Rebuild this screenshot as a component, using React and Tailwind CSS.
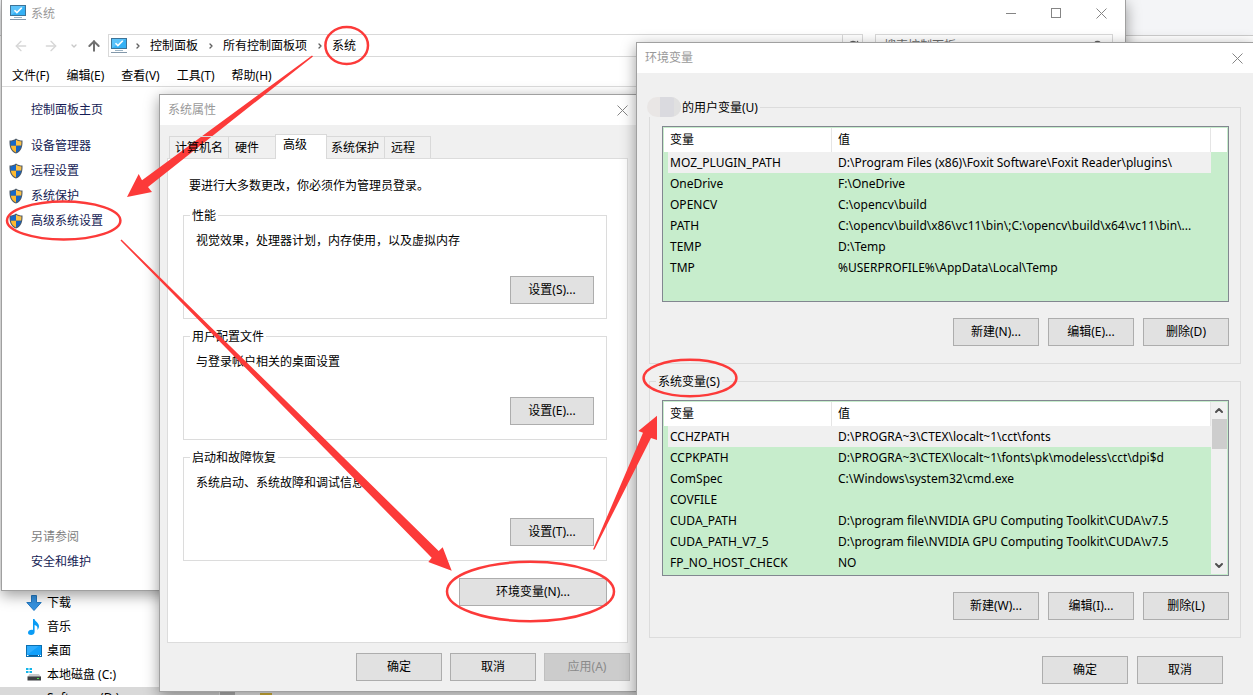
import React from 'react';
import { ArrowLeft, ArrowRight, ArrowUp, ChevronDown, ChevronRight, ChevronUp, RotateCw, Search } from "lucide-react";

const menus = ["文件(F)", "编辑(E)", "查看(V)", "工具(T)", "帮助(H)"];

const tasks = ["设备管理器", "远程设置", "系统保护", "高级系统设置"];

const crumbs = ["控制面板", "所有控制面板项", "系统"];

const settingGroups = [
  { title: "性能", text: "视觉效果，处理器计划，内存使用，以及虚拟内存", button: "设置(S)..." },
  { title: "用户配置文件", text: "与登录帐户相关的桌面设置", button: "设置(E)..." },
  { title: "启动和故障恢复", text: "系统启动、系统故障和调试信息", button: "设置(T)..." },
];

const userVars = [
  ["MOZ_PLUGIN_PATH", "D:\\Program Files (x86)\\Foxit Software\\Foxit Reader\\plugins\\"],
  ["OneDrive", "F:\\OneDrive"],
  ["OPENCV", "C:\\opencv\\build"],
  ["PATH", "C:\\opencv\\build\\x86\\vc11\\bin\\;C:\\opencv\\build\\x64\\vc11\\bin\\..."],
  ["TEMP", "D:\\Temp"],
  ["TMP", "%USERPROFILE%\\AppData\\Local\\Temp"],
];

const systemVars = [
  ["CCHZPATH", "D:\\PROGRA~3\\CTEX\\localt~1\\cct\\fonts"],
  ["CCPKPATH", "D:\\PROGRA~3\\CTEX\\localt~1\\fonts\\pk\\modeless\\cct\\dpi$d"],
  ["ComSpec", "C:\\Windows\\system32\\cmd.exe"],
  ["COVFILE", ""],
  ["CUDA_PATH", "D:\\program file\\NVIDIA GPU Computing Toolkit\\CUDA\\v7.5"],
  ["CUDA_PATH_V7_5", "D:\\program file\\NVIDIA GPU Computing Toolkit\\CUDA\\v7.5"],
  ["FP_NO_HOST_CHECK", "NO"],
];

/* ---------- icons ---------- */

const MonitorIcon = () => (
  <svg className="w-4 h-4 shrink-0" viewBox="0 0 16 16" aria-hidden="true">
    <rect x="0.5" y="0.5" width="15" height="10" fill="#35b1f5" stroke="#3d7397" />
    <path d="M1 1h14L1 10z" fill="#5cc3fa" />
    <path d="M4.5 5.2l2.4 2.4L11.8 2.8" fill="none" stroke="#fff" strokeWidth="1.6" />
    <path d="M4 12.5h8" stroke="#9db4c4" />
    <path d="M0 14.5h16" stroke="#8398aa" />
  </svg>
);

const ShieldIcon = () => (
  <svg className="w-[14px] h-4 shrink-0" viewBox="0 0 14 16" aria-hidden="true">
    <path d="M7 0.4C5.2 1.8 3 2.4 0.5 2.4 0.3 8.5 1.4 13 7 15.6 12.6 13 13.7 8.5 13.5 2.4 11 2.4 8.8 1.8 7 0.4z" fill="#4d5a68" />
    <path d="M7 1.8C5.4 2.9 3.6 3.4 1.6 3.5c0 1.6 0 3 .3 4.3H7z" fill="#1668c9" />
    <path d="M7 1.8c1.6 1.1 3.4 1.6 5.4 1.7 0 1.6 0 3-.3 4.3H7z" fill="#fdc144" />
    <path d="M1.9 7.8C2.4 10.9 3.8 13 7 14.4V7.8z" fill="#fdb92f" />
    <path d="M12.1 7.8C11.6 10.9 10.2 13 7 14.4V7.8z" fill="#1562c0" />
  </svg>
);

const CloseIcon = () => (
  <svg className="w-[11px] h-[11px]" viewBox="0 0 11 11" aria-hidden="true">
    <path d="M0.5 0.5l10 10M10.5 0.5l-10 10" stroke="#858585" strokeWidth="1" />
  </svg>
);

const DownloadIcon = () => (
  <svg className="w-4 h-4" viewBox="0 0 16 16" aria-hidden="true">
    <path d="M5.5 0.5h5v7h4.7L8 15.5 0.8 7.5h4.7z" fill="#3592e0" stroke="#2379c2" />
  </svg>
);

const MusicIcon = () => (
  <svg className="w-4 h-4" viewBox="0 0 16 16" aria-hidden="true">
    <path d="M7 0h1.500c.4 2.600 4.800 3.800 4.500 7.600-.1 1.500-.8 2.500-1.800 3.400.8-2.600.1-4.200-2.600-5V13c0 1.800-1.600 3-3.500 3C3.300 16 2 15.200 2 13.800c0-1.700 1.700-3 3.700-3 .5 0 .9.100 1.300.200z" fill="#0a9cf5" />
  </svg>
);

const DesktopIcon = () => (
  <svg className="w-4 h-4" viewBox="0 0 16 16" aria-hidden="true">
    <rect x="0.5" y="2.5" width="15" height="11" fill="#11a0fb" stroke="#0b6fb0" />
    <path d="M1 12V3h12z" fill="#2fadfd" />
    <path d="M1 12.5h14" stroke="#0b5f9c" />
    <path d="M1 12.5h1.5M12 12.5h1M14 12.5h1" stroke="#fff" />
  </svg>
);

const DiskIcon = () => (
  <svg className="w-4 h-4" viewBox="0 0 16 16" aria-hidden="true">
    <path d="M0 1h2.5v2H0zM3.500 1H6v2H3.500zM0 4h2.500v2H0zM3.500 4H6v2H3.500z" fill="#12b5ea" />
    <path d="M3.500 7h9.500l2 3H1.500z" fill="#c9cacc" />
    <rect x="1.5" y="9.5" width="13.5" height="4" fill="#3d3f42" />
    <rect x="11" y="11" width="2" height="1" fill="#54e04c" />
  </svg>
);

/* ---------- shared controls ---------- */

const Button = ({ children, className = "w-[86px]", disabled }) => (
  <button
    type="button"
    disabled={disabled}
    className={`${className} h-7 border leading-[18px] text-center ${
      disabled ? "bg-[#cccccc] border-[#bfbfbf] text-[#8a8a8a]" : "bg-[#e1e1e1] border-[#adadad] hover:bg-[#e5f1fb] hover:border-[#0078d7]"
    }`}
  >
    {children}
  </button>
);

const DialogTitle = ({ title }) => (
  <div className="flex items-center justify-between h-[30px] pl-2 pr-[10px] bg-white text-[#999999]">
    <h2>{title}</h2>
    <button type="button" aria-label={`关闭${title}`}>
      <CloseIcon />
    </button>
  </div>
);

const VariableTable = ({ label, rows, scroll }) => (
  <div className="mt-[9px] flex h-[176px] border border-[#828790] bg-[#c7edcc] p-px">
    <div className="flex-1 min-w-0">
      <table aria-label={label} className="w-full table-fixed border-separate border-spacing-0 text-left">
        <thead>
          <tr className="h-6 bg-white">
            <th className="w-[168px] pl-[6px] font-normal border-r border-[#e5e5e5]">变量</th>
            <th className="pl-[6px] font-normal border-r border-[#e5e5e5]">值</th>
          </tr>
        </thead>
        <tbody>
          {rows.map(([name, value], i) => (
            <tr key={name} className={i === 0 ? "h-[21px] bg-[#f0f0f0]" : "h-[21px]"}>
              <td className="border-l-4 border-[#c7edcc] pl-0.5 whitespace-nowrap">{name}</td>
              <td className="pl-[6px] whitespace-nowrap">{value}</td>
            </tr>
          ))}
        </tbody>
      </table>
    </div>
    {scroll ? (
      <div className="w-4 flex flex-col items-center bg-[#f0f0f0] text-[#505050]">
        <ChevronUp className="w-3 h-[17px]" strokeWidth={4} />
        <div className="w-[15px] h-[30px] bg-[#cdcdcd]" />
        <ChevronDown className="w-3 h-[17px] mt-auto" strokeWidth={4} />
      </div>
    ) : (
      <div className="w-4 h-6 bg-white" />
    )}
  </div>
);

/* ---------- windows ---------- */

const ExplorerBackdrop = () => (
  <div className="absolute inset-0 flex flex-col justify-between bg-white">
    <div className="h-9 bg-[#f4f5f7] border-b border-[#cccccc]" />
    <div className="w-full h-[104px] shrink-0 overflow-hidden">
      <ul>
        <li className="flex items-center gap-[5px] h-6 pl-[26px]"><DownloadIcon />下载</li>
        <li className="flex items-center gap-[5px] h-6 pl-[26px]"><MusicIcon />音乐</li>
        <li className="flex items-center gap-[5px] h-6 pl-[26px]"><DesktopIcon />桌面</li>
        <li className="flex items-center gap-[5px] h-6 pl-[26px]"><DiskIcon />本地磁盘 (C:)</li>
        <li className="flex h-6 bg-[#f0f0f0]">
          <span className="w-[219px] pt-0.5 pl-[47px] bg-[#d9d9d9]">Software (D:)</span>
          <span className="ml-px w-[15px] bg-[#b5b5b5]" />
          <span className="ml-[25px] mt-[6px] w-3 bg-[#d9b73a]" />
        </li>
      </ul>
    </div>
  </div>
);

const SystemWindow = () => (
  <section aria-label="系统" className="absolute left-px right-[127px] top-0 h-[591px] flex flex-col bg-white border-x border-b border-[#a0a0a0] shadow-[0_4px_14px_rgba(0,0,0,0.4)]">
    <div className="flex items-center gap-[5px] h-[26px] pl-2 text-[#999999]">
      <MonitorIcon />
      <h1 className="flex-1 pt-0.5">系统</h1>
      <div className="flex items-center gap-[35px] pr-[18px]">
        <button type="button" aria-label="最小化" className="w-[10px] h-px bg-[#858585]" />
        <button type="button" aria-label="最大化" className="w-[10px] h-[10px] border border-[#858585]" />
        <button type="button" aria-label="关闭"><CloseIcon /></button>
      </div>
    </div>

    {/* Navigation and address bar */}
    <div className="mt-2 flex items-center h-[23px] pr-3">
      <nav className="flex items-center w-[106px] pl-[11px]">
        <ArrowLeft className="w-4 h-4 text-[#d6d6d6]" />
        <ArrowRight className="w-4 h-4 ml-[14px] text-[#d6d6d6]" />
        <ChevronDown className="w-2 h-2 ml-[11px] text-[#c8c8c8]" strokeWidth={4} />
        <ArrowUp className="w-4 h-4 ml-2 text-[#707070]" strokeWidth={3} />
      </nav>
      <div className="flex flex-1 items-center h-full pl-0.5 border border-[#d9d9d9]">
        <MonitorIcon />
        {crumbs.map((crumb) => (
          <React.Fragment key={crumb}>
            <ChevronRight className="w-2 h-2 ml-[7px] mr-2 text-[#606060]" strokeWidth={4} />
            <a href="#" className="mr-0.5 whitespace-nowrap">{crumb}</a>
          </React.Fragment>
        ))}
        <span className="ml-auto w-5 h-full flex items-center justify-center border-l border-[#d9d9d9]">
          <RotateCw className="w-3 h-3 text-[#606060]" strokeWidth={3} />
        </span>
      </div>
      <div className="ml-3 flex items-center w-[238px] h-full px-2 border border-[#d9d9d9]">
        <input type="search" aria-label="搜索控制面板" placeholder="搜索控制面板" className="flex-1 min-w-0 placeholder:text-[#6d6d6d]" />
        <Search className="w-3 h-3 text-[#606060]" strokeWidth={3} />
      </div>
    </div>

    <ul className="flex items-center gap-[17px] h-[30px] pt-2 pl-[10px] border-b border-[#dcdcdc]">
      {menus.map((menu) => (
        <li key={menu}><button type="button">{menu}</button></li>
      ))}
    </ul>

    {/* Left task pane */}
    <aside className="flex flex-1 flex-col pt-[14px] pb-[19px] text-[#151c55]">
      <a href="#" className="pl-[29px]">控制面板主页</a>
      <ul className="mt-[14px]">
        {tasks.map((task) => (
          <li key={task} className="h-[25px]">
            <a href="#" className="flex items-center h-[25px] gap-2 pl-[7px]"><ShieldIcon />{task}</a>
          </li>
        ))}
      </ul>
      <h2 className="mt-auto pl-[29px] text-[#808080]">另请参阅</h2>
      <a href="#" className="mt-[7px] pl-[29px]">安全和维护</a>
    </aside>
  </section>
);

const PropertiesDialog = () => (
  <section aria-label="系统属性" className="absolute left-[159px] top-[94px] w-[480px] bg-[#f0f0f0] border border-[#a0a0a0] shadow-[0_4px_14px_rgba(0,0,0,0.4)]">
    <DialogTitle title="系统属性" />
    <div className="pt-[9px] pb-[10px] pl-[7px] pr-2">
      <div role="tablist" className="relative z-10 flex items-end pl-0.5">
        <button type="button" role="tab" className="w-[60px] h-[22px] text-center border border-b-0 border-[#d9d9d9]">计算机名</button>
        <button type="button" role="tab" className="w-[46px] h-[22px] pl-[6px] text-left border-t border-[#d9d9d9]">硬件</button>
        <button type="button" role="tab" aria-selected="true" className="w-[52px] h-[25px] -mb-px pl-[7px] pb-1 text-left bg-white border border-b-0 border-[#d9d9d9]">高级</button>
        <button type="button" role="tab" className="w-[58px] h-[22px] pl-1 text-left border-t border-r border-[#d9d9d9]">系统保护</button>
        <button type="button" role="tab" className="w-[46px] h-[22px] pl-[6px] text-left border-t border-r border-[#d9d9d9]">远程</button>
      </div>

      <div role="tabpanel" className="mr-0.5 pt-[18px] pb-9 pl-[15px] pr-5 bg-white border border-[#dcdcdc]">
        <p className="pl-[6px]">要进行大多数更改，你必须作为管理员登录。</p>
        <div className="mt-[10px] flex flex-col gap-[7px]">
          {settingGroups.map((group) => (
            <fieldset key={group.title} className="border border-[#dcdcdc] pl-3 pr-3 pb-[14px]">
              <legend className="-ml-[6px] px-0.5 pt-0.5">{group.title}</legend>
              <p className="mt-[7px]">{group.text}</p>
              <div className="mt-[26px] flex justify-end">
                <Button className="w-[84px]">{group.button}</Button>
              </div>
            </fieldset>
          ))}
        </div>
        <div className="mt-[17px] flex justify-end">
          <Button className="w-[148px]">环境变量(N)...</Button>
        </div>
      </div>

      <div className="mt-[10px] flex justify-end gap-2">
        <Button>确定</Button>
        <Button>取消</Button>
        <Button disabled>应用(A)</Button>
      </div>
    </div>
  </section>
);

const VariablesDialog = () => (
  <section aria-label="环境变量" className="absolute left-[636px] -right-px top-[42px] -bottom-5 bg-[#f0f0f0] border border-[#a0a0a0] shadow-[0_4px_14px_rgba(0,0,0,0.4)]">
    <DialogTitle title="环境变量" />
    <div className="pt-6 pl-3 pr-3">
      <fieldset className="border border-[#dcdcdc] pl-3 pr-[11px] pb-[17px]">
        <legend className="flex items-center gap-px h-5 -ml-[15px] pr-0.5">
          <span className="flex w-[34px] h-5 rounded-full overflow-hidden bg-[#e9e6e5]">
            <span className="ml-[13px] w-[14px] bg-[#dadadf]" />
            <span className="flex-1 bg-[#e0e0e0]" />
          </span>
          <span className="pt-0.5">的用户变量(U)</span>
        </legend>
        <VariableTable label="用户变量" rows={userVars} />
        <div className="mt-4 flex justify-end gap-[9px]">
          <Button>新建(N)...</Button>
          <Button>编辑(E)...</Button>
          <Button>删除(D)</Button>
        </div>
      </fieldset>
      <fieldset className="mt-[7px] border border-[#dcdcdc] pl-3 pr-[11px] pb-[17px]">
        <legend className="-ml-[6px] px-0.5 pt-0.5">系统变量(S)</legend>
        <VariableTable label="系统变量" rows={systemVars} scroll />
        <div className="mt-4 flex justify-end gap-[9px]">
          <Button>新建(W)...</Button>
          <Button>编辑(I)...</Button>
          <Button>删除(L)</Button>
        </div>
      </fieldset>
      <div className="mt-[18px] flex justify-end gap-[9px] pr-[18px]">
        <Button>确定</Button>
        <Button>取消</Button>
      </div>
    </div>
  </section>
);

/* Red circles and arrows that walk through the steps */
const Annotations = () => (
  <svg className="absolute left-0 top-0 w-[760px] h-[640px] pointer-events-none" viewBox="0 0 760 640" aria-hidden="true">
    <g fill="none" stroke="#fc3a39" strokeWidth="2.5">
      <ellipse cx="346.700" cy="45.500" rx="21.300" ry="18.500" />
      <ellipse cx="63.700" cy="220.500" rx="56.700" ry="19" />
      <ellipse cx="530.500" cy="591.500" rx="83.500" ry="29.700" />
      <ellipse cx="690" cy="378" rx="46.400" ry="18.300" />
    </g>
    <g fill="#fc3a39">
      <path d="M312 55.500L142 180.300 138.700 174 127 197 152 192 148 187 313 56.500z" />
      <path d="M121.500 239.500L438.700 551 442.700 547.300 451.700 570.700 428.300 562 431.700 557.700 120.500 240.500z" />
      <path d="M593 549.500L643 432.700 638.400 431 657 415.700V440L651 438 594.500 549.500z" />
    </g>
  </svg>
);

export default function App() {
  return (
    <main className="relative w-full h-screen overflow-hidden bg-white text-black text-[12px] leading-[18px] font-['Noto_Sans','Noto_Sans_CJK_SC',sans-serif]">
      <ExplorerBackdrop />
      <SystemWindow />
      <PropertiesDialog />
      <VariablesDialog />
      <Annotations />
    </main>
  );
}
